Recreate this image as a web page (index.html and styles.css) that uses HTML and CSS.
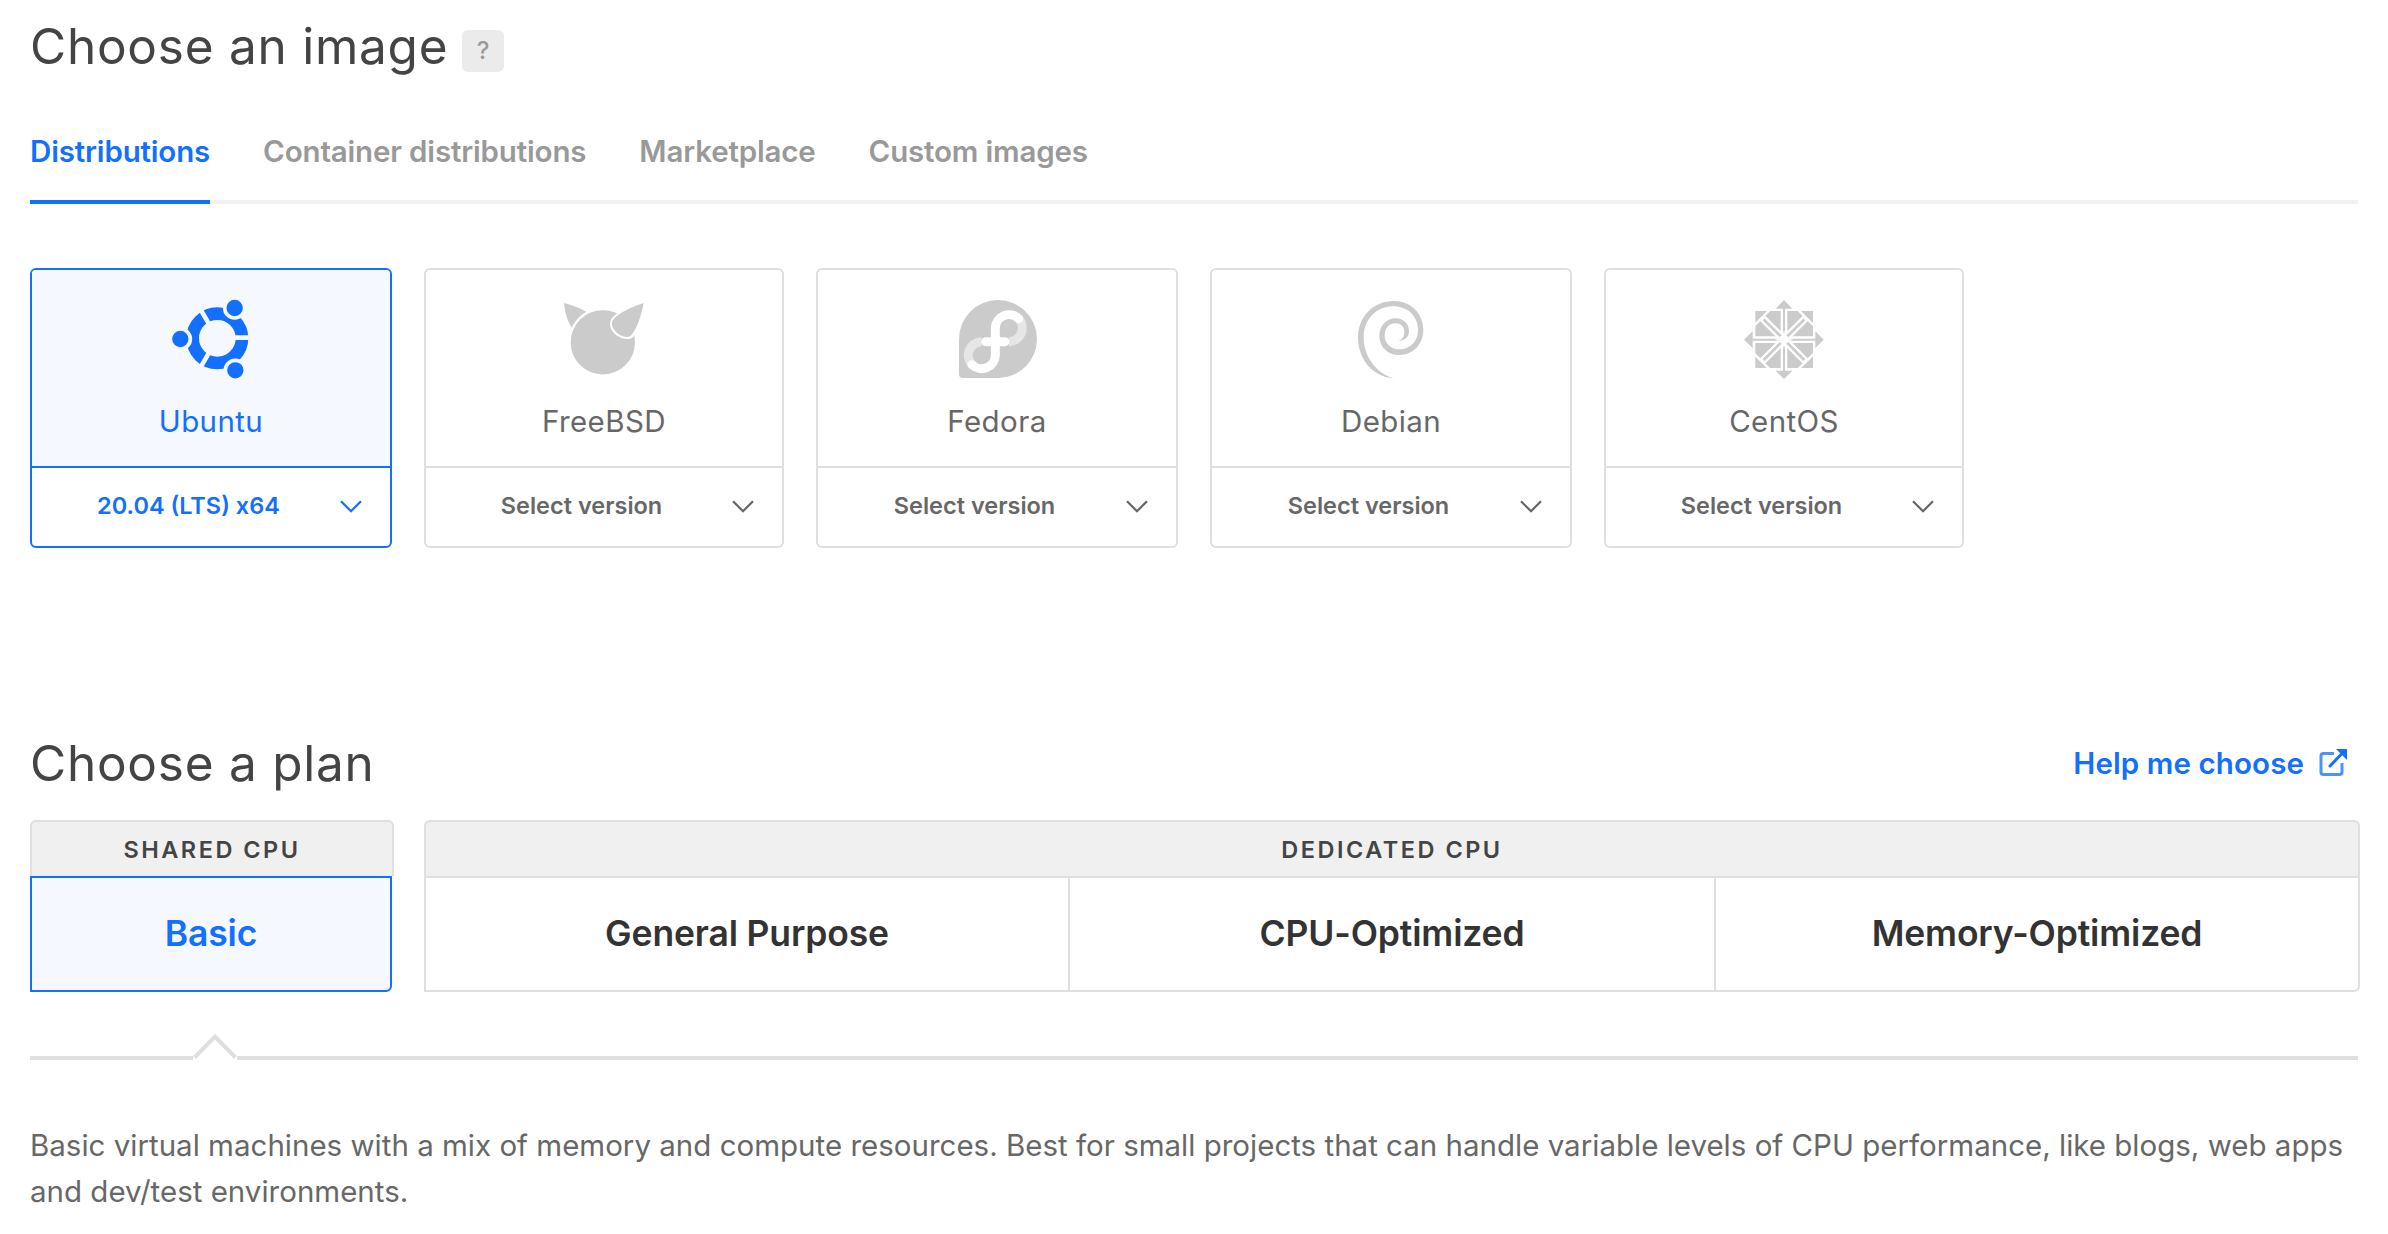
FILE: index.html
```html
<!DOCTYPE html>
<html lang="en">
<head>
<meta charset="utf-8">
<title>Create Droplet</title>
<link rel="stylesheet" href="styles.css">
</head>
<body>
<main class="page">
  <section class="images">
    <div class="heading-row">
      <h1 class="heading heading-image">Choose an image</h1>
      <button class="help-badge">?</button>
    </div>
    <nav class="tabs">
      <a class="tab tab-active">Distributions</a>
      <a class="tab">Container distributions</a>
      <a class="tab">Marketplace</a>
      <a class="tab">Custom images</a>
    </nav>
    <div class="distros">
      <article class="distro distro-selected">
        <div class="distro-top">
          <svg class="logo" viewBox="453 117 240 240">
            <circle cx="592" cy="235" r="74" fill="none" stroke="#126fff" stroke-width="38"/>
            <g stroke="#f5f8ff" stroke-width="14">
              <path d="M592 233H700M592 235L538 142M592 235L538 328"/>
            </g>
            <g fill="#126fff" stroke="#f5f8ff" stroke-width="11">
              <circle cx="481" cy="237" r="30"/><circle cx="644" cy="144" r="30"/><circle cx="646" cy="331" r="30"/>
            </g>
          </svg>
          <span class="name">Ubuntu</span>
        </div>
        <div class="version"><span class="version-text">20.04 (LTS) x64</span><svg class="chevron" viewBox="0 0 22 13"><path d="M1 1.2L11 11.2L21 1.2"/></svg></div>
      </article>
      <article class="distro">
        <div class="distro-top">
          <svg class="logo" viewBox="462 117 240 240" fill="#cbcbcb">
            <path d="M462 129Q500 138 528 155Q500 172 485 203Q465 170 462 129z"/>
            <circle cx="578.500" cy="247" r="96.500"/>
            <path d="M706 124C694 175 685 210 670 230C662 239 646 240 628 231C606 219 596 198 602 182C607 166 650 140 706 124z" fill="#fff"/>
            <path d="M701 129C693 172 680 206 664 226C657 233 644 232 630 225C611 214 602 197 607 184C612 169 655 143 701 129z"/>
          </svg>
          <span class="name">FreeBSD</span>
        </div>
        <div class="version"><span class="version-text">Select version</span><svg class="chevron" viewBox="0 0 22 13"><path d="M1 1.2L11 11.2L21 1.2"/></svg></div>
      </article>
      <article class="distro">
        <div class="distro-top">
          <svg class="logo" viewBox="471 117 240 240" fill="none" stroke-width="27">
            <path d="M477 237A117 117 0 1 1 594 354H489Q477 354 477 342z" fill="#cbcbcb"/>
            <path d="M656 176A41 41 0 0 1 627 245M516 314A41 41 0 0 1 545 245" stroke="#e6e6e6"/>
            <path d="M656 176A41 41 0 0 0 586 204V285A41 41 0 0 1 516 314M557 245H615" stroke="#fff" stroke-linecap="round"/>
          </svg>
          <span class="name">Fedora</span>
        </div>
        <div class="version"><span class="version-text">Select version</span><svg class="chevron" viewBox="0 0 22 13"><path d="M1 1.2L11 11.2L21 1.2"/></svg></div>
      </article>
      <article class="distro">
        <div class="distro-top">
          <svg class="logo" viewBox="453 117 240 240" fill="#cbcbcb">
            <path d="M582 355C520 352 474 300 474 232C474 170 520 123 582 123C632 123 670 160 670 210C670 252 640 285 598 285C562 285 538 258 538 227C538 198 560 175 587 175C610 175 627 192 627 213C627 232 613 243 594 243C606 240 613 230 613 215C613 200 602 190 586 190C567 190 554 205 554 227C554 250 573 268 598 268C632 268 654 243 654 210C654 168 622 139 580 139C530 139 491 178 491 232C491 290 530 342 582 355z"/>
          </svg>
          <span class="name">Debian</span>
        </div>
        <div class="version"><span class="version-text">Select version</span><svg class="chevron" viewBox="0 0 22 13"><path d="M1 1.2L11 11.2L21 1.2"/></svg></div>
      </article>
      <article class="distro">
        <div class="distro-top">
          <svg class="logo" viewBox="462 117 240 240" fill="none">
            <path d="M496 153H669V324H496z" fill="#cbcbcb"/>
            <g stroke="#fff">
              <path d="M582 107L714 239L582 371L450 239z" stroke-width="7"/>
              <path d="M582 150V328M493 239H672" stroke-width="20"/>
              <path d="M518 175L646 303M518 303L646 175" stroke-width="22"/>
            </g>
            <g stroke="#cbcbcb">
              <path d="M582 140V338M486 239H678" stroke-width="6"/>
              <path d="M521 178L643 300M521 300L643 178" stroke-width="8"/>
            </g>
            <path d="M582 211L588 233L610 239L588 245L582 267L576 245L554 239L576 233z" fill="#fff"/>
            <circle cx="582" cy="239" r="14" fill="#fff"/>
            <path d="M582 120L607 146H557zM701 239L676 264V214zM582 357L557 332H607zM462 239L488 214V264z" fill="#cbcbcb"/>
          </svg>
          <span class="name">CentOS</span>
        </div>
        <div class="version"><span class="version-text">Select version</span><svg class="chevron" viewBox="0 0 22 13"><path d="M1 1.2L11 11.2L21 1.2"/></svg></div>
      </article>
    </div>
  </section>

  <section class="plans">
    <div class="plan-heading-row">
      <h2 class="heading">Choose a plan</h2>
      <a class="help-link">Help me choose
        <svg class="external" viewBox="0 0 28 28"><path d="M15 4.500H4.500Q2 4.500 2 7V23Q2 25.500 4.500 25.500H20.500Q23 25.500 23 23V14" fill="none" stroke="#4b92ff" stroke-width="3"/><path d="M11 17L22 5.500" stroke="#126fff" stroke-width="3" stroke-linecap="round"/><path d="M17 0H28V11z" fill="#126fff"/></svg>
      </a>
    </div>
    <div class="plan-groups">
      <div class="plan-group">
        <div class="plan-header">SHARED CPU</div>
        <div class="plan-cells"><div class="plan plan-selected">Basic</div></div>
      </div>
      <div class="plan-group">
        <div class="plan-header">DEDICATED CPU</div>
        <div class="plan-cells plan-cells-three">
          <div class="plan">General Purpose</div>
          <div class="plan">CPU-Optimized</div>
          <div class="plan">Memory-Optimized</div>
        </div>
      </div>
    </div>
    <div class="rule"><span class="rule-line rule-start"></span><svg class="caret" viewBox="0 0 44 28"><path d="M1.500 25.500L22 4.500L42.500 25.500" fill="none" stroke="#dfdfdf" stroke-width="4"/></svg><span class="rule-line rule-end"></span></div>
    <p class="description">Basic virtual machines with a mix of memory and compute resources. Best for small projects that can handle variable levels of CPU performance, like blogs, web apps<br>and dev/test environments.</p>
  </section>
</main>
</body>
</html>
```
FILE: styles.css
```css
* { box-sizing: border-box; }

body {
  margin: 0;
  background: #fff;
  color: #676767;
  font-family: Inter, "Liberation Sans", sans-serif;
}

.page { padding: 0 30px; }

.heading-row { display: flex; align-items: center; height: 100px; }
.heading { margin: 0; color: #444; font-size: 49.5px; line-height: 60px; font-weight: 400; letter-spacing: 0.75px; }
.heading-image { width: 432px; padding-bottom: 8px; white-space: nowrap; }

.help-badge {
  width: 42px; height: 42px; margin-top: 2px; padding: 0; border: 0; border-radius: 6px;
  background: #ebebeb; color: #999; font: 500 24px/42px Inter, sans-serif;
}

.tabs { display: flex; gap: 53px; height: 104px; border-bottom: 4px solid #f1f1f1; }
.tab { height: 104px; padding-top: 31px; color: #999; font-size: 29.5px; line-height: 40px; font-weight: 600; letter-spacing: -0.16px; }
.tab-active { border-bottom: 4px solid #126fff; color: #126fff; }

.distros { display: grid; grid-template-columns: 362px 360px 362px 362px 360px; gap: 32px; margin-top: 64px; }
.distro { height: 280px; border: 2px solid #dfdfdf; border-radius: 6px; overflow: hidden; }
.distro-top { display: flex; flex-direction: column; align-items: center; height: 198px; padding-top: 29px; border-bottom: 2px solid #dfdfdf; }
.logo { width: 80px; height: 80px; overflow: visible; }
.name { margin-top: 22px; font-size: 29.5px; line-height: 40px; font-weight: 400; letter-spacing: 0.4px; }
.version { display: flex; align-items: center; height: 78px; padding: 0 28px 4px 5px; color: #676767; font-size: 23.5px; font-weight: 600; }
.version-text { flex: 1; text-align: center; }
.chevron { width: 22px; height: 13px; margin-top: 2px; fill: none; stroke: currentColor; stroke-width: 2.2; }

.distro-selected, .distro-selected .distro-top { border-color: #126fff; }
.distro-selected .distro-top { background: #f5f8ff; color: #126fff; }
.distro-selected .version { color: #126fff; }

.plans { margin-top: 184px; }
.plan-heading-row { display: flex; align-items: center; justify-content: space-between; height: 88px; padding: 0 11px 27px 0; }
.help-link { display: flex; align-items: center; gap: 15px; color: #126fff; font-size: 29.5px; line-height: 40px; font-weight: 600; letter-spacing: 0.1px; }
.external { width: 28px; height: 28px; }

.plan-groups { display: grid; grid-template-columns: 364px 1936px; gap: 30px; }
.plan-header {
  height: 56px; border: 2px solid #dfdfdf; border-bottom: 0; border-radius: 6px 6px 0 0;
  background: #f0f0f0; color: #444; font-size: 23.5px; line-height: 56px; font-weight: 600; letter-spacing: 2.5px; text-align: center;
}
.plan-cells { display: grid; height: 116px; }
.plan-cells-three { grid-template-columns: 644px 646px 646px; }
.plan {
  border: 2px solid #dfdfdf; border-right-width: 0;
  color: #333; font-size: 35.5px; line-height: 112px; font-weight: 600; letter-spacing: -0.15px; text-align: center;
}
.plan:last-child { border-right-width: 2px; border-radius: 0 0 6px 0; }
.plan-selected { width: 362px; border-color: #126fff; background: #f5f8ff; color: #126fff; }

.rule { display: flex; align-items: flex-end; height: 68px; }
.rule-line { height: 4px; background: #dfdfdf; }
.rule-start { width: 163px; }
.rule-end { flex: 1; }
.caret { width: 44px; height: 28px; }

.description { margin: 62px 0 0; color: #676767; font-size: 29.5px; line-height: 46px; font-weight: 400; white-space: nowrap; }
```
